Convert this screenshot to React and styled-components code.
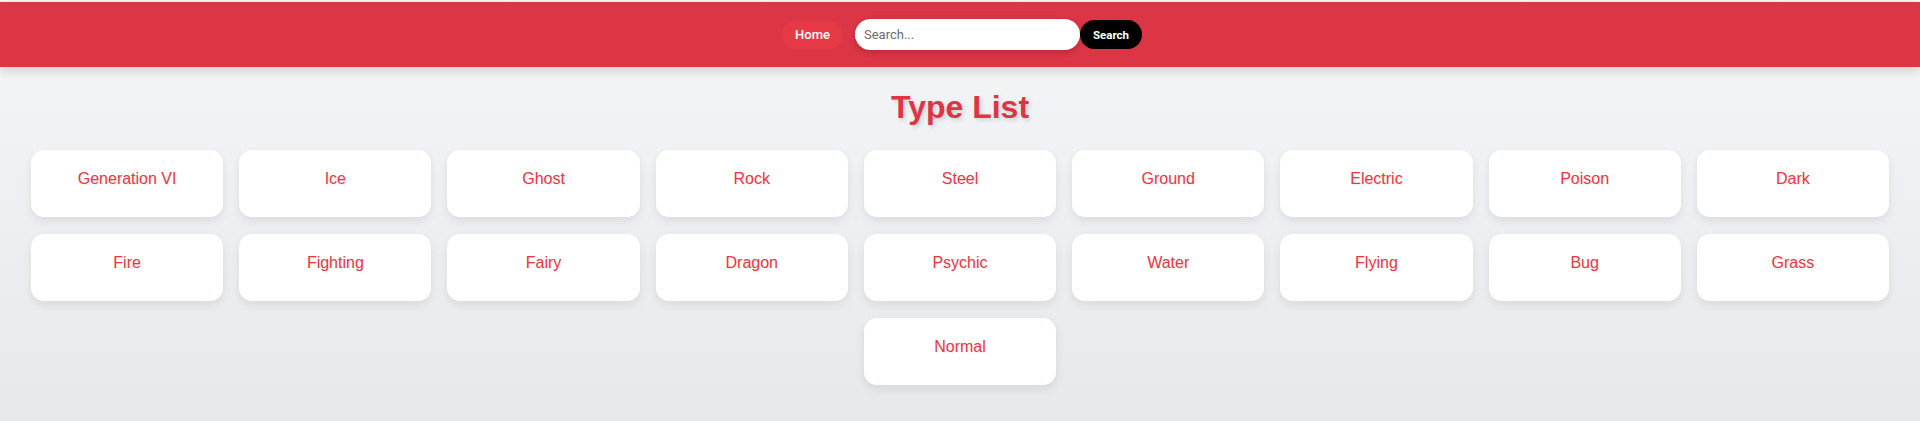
import React from "react";
import styled, { createGlobalStyle } from "styled-components";

const GlobalStyle = createGlobalStyle`
  html, body { margin: 0; padding: 0; }
  body {
    min-height: 421px;
    background: linear-gradient(180deg, #f5f6f8 0%, #e6e8eb 100%);
    font-family: "Liberation Sans", Arial, sans-serif;
  }
  * { box-sizing: border-box; }
`;

const Page = styled.div`
  min-height: 421px;
  padding-top: 2px;
  background: linear-gradient(180deg, #f5f6f8 0%, #e6e8eb 100%);
`;

const NavBar = styled.header`
  height: 65px;
  background: #dc3545;
  display: flex;
  align-items: center;
  justify-content: center;
  gap: 12px;
  box-shadow: 0 4px 10px rgba(0, 0, 0, 0.15);
  padding-left: 4px;
`;

const NavLink = styled.a`
  display: inline-flex;
  align-items: center;
  justify-content: center;
  width: 61px;
  height: 28px;
  border-radius: 14px;
  background: #e63946;
  color: #fff;
  font-family: Roboto, "Noto Sans", sans-serif;
  font-size: 13px;
  font-weight: 500;
  text-decoration: none;
`;

const SearchForm = styled.form`
  display: flex;
  align-items: center;
`;

const SearchInput = styled.input`
  width: 225px;
  height: 31px;
  border: none;
  border-radius: 16px;
  padding: 0 9px;
  font-family: Roboto, "Noto Sans", sans-serif;
  font-size: 13px;
  outline: none;
  box-shadow: 0 2px 6px rgba(0, 0, 0, 0.2);
  &::placeholder { color: #6b6b6b; }
`;

const SearchButton = styled.button`
  width: 62px;
  height: 29px;
  border: none;
  border-radius: 15px;
  background: #000;
  color: #fff;
  font-family: Roboto, "Noto Sans", sans-serif;
  font-size: 11.5px;
  font-weight: 700;
  cursor: pointer;
`;

const Title = styled.h1`
  margin: 22px 0 24px;
  text-align: center;
  color: #dc3545;
  font-family: "Liberation Sans", Arial, sans-serif;
  font-size: 32px;
  font-weight: 700;
  text-shadow: 2px 2px 4px rgba(0, 0, 0, 0.15);
`;

const Grid = styled.div`
  display: flex;
  flex-wrap: wrap;
  justify-content: center;
  column-gap: 16px;
  row-gap: 17px;
  padding: 0 31px 30px;
`;

const Card = styled.div`
  width: calc((100% - 128px) / 9);
  height: 67px;
  padding-top: 20px;
  background: #fff;
  border-radius: 13px;
  box-shadow: 0 4px 10px rgba(0, 0, 0, 0.08);
  text-align: center;
  color: #e63946;
  font-family: "Liberation Sans", Arial, sans-serif;
  font-size: 16px;
  line-height: 18px;
  text-shadow: 1px 1px 2px rgba(0, 0, 0, 0.1);
`;

const types = [
  "Generation VI", "Ice", "Ghost", "Rock", "Steel", "Ground", "Electric", "Poison", "Dark",
  "Fire", "Fighting", "Fairy", "Dragon", "Psychic", "Water", "Flying", "Bug", "Grass",
  "Normal",
];

export default function App() {
  return (
    <>
      <GlobalStyle />
      <Page>
        <NavBar>
          <NavLink href="#">Home</NavLink>
          <SearchForm onSubmit={(e) => e.preventDefault()}>
            <SearchInput placeholder="Search..." />
            <SearchButton type="submit">Search</SearchButton>
          </SearchForm>
        </NavBar>
        <Title>Type List</Title>
        <Grid>
          {types.map((t) => (
            <Card key={t}>{t}</Card>
          ))}
        </Grid>
      </Page>
    </>
  );
}
